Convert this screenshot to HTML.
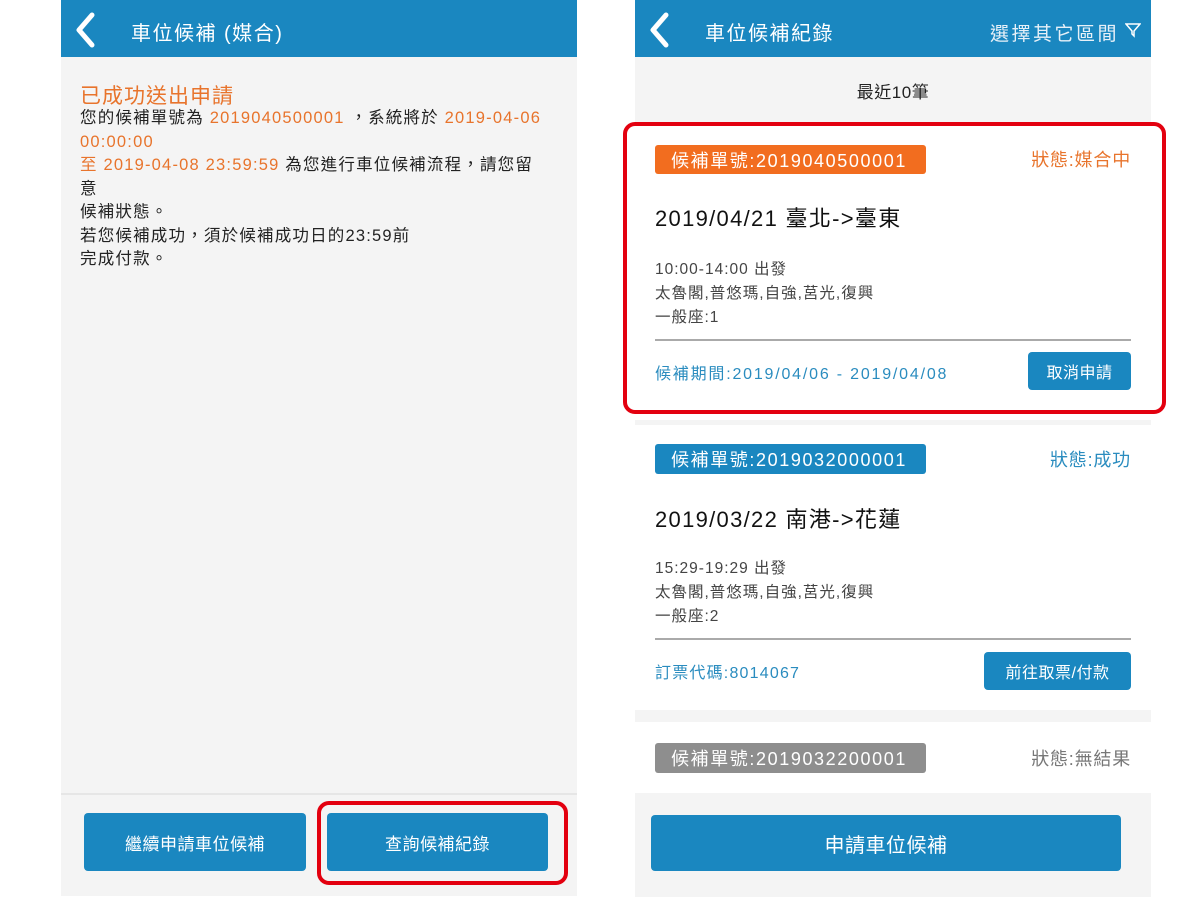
<!DOCTYPE html>
<html><head><meta charset="utf-8"><style>
*{margin:0;padding:0;box-sizing:border-box}
body{width:1200px;height:900px;background:#fff;position:relative;overflow:hidden;font-family:"Liberation Sans","Noto Sans CJK TC",sans-serif;color:#222}
.a{position:absolute;white-space:nowrap}
.hdr{background:#1a87c0;height:57px;top:0}
.ht{color:#fff;font-size:20px;letter-spacing:1.5px}
.or{color:#e8742c}
.bl{color:#2a8cbf}
.btn{position:absolute;background:#1a87c0;color:#fff;border-radius:4px;display:flex;align-items:center;justify-content:center;font-size:17px;letter-spacing:0.5px}
.badge{position:absolute;color:#fff;border-radius:3px;font-size:18px;display:flex;align-items:center;padding-left:16px;letter-spacing:1.6px}
.det{font-size:15.5px;color:#444;line-height:24px;letter-spacing:1px}
</style></head><body>
<!-- left panel -->
<div class="a" style="left:61px;top:0;width:516px;height:896px;background:#f4f4f4"></div>
<div class="a hdr" style="left:61px;width:516px"></div>
<svg class="a" style="left:72px;top:11px" width="28" height="38"><path d="M20 4 L7 19 L20 34" stroke="#fff" stroke-width="5" fill="none" stroke-linecap="round" stroke-linejoin="round"/></svg>
<div class="a ht" style="left:131px;top:17px">車位候補 (媒合)</div>
<div class="a or" style="left:80px;top:80px;font-size:21px;letter-spacing:1px">已成功送出申請</div>
<div class="a" style="left:80px;top:107px;font-size:16.5px;line-height:23.5px;color:#222;letter-spacing:1.2px">您的候補單號為 <span class="or">2019040500001</span> ，系統將於 <span class="or">2019-04-06</span><br><span class="or">00:00:00</span><br><span class="or">至 2019-04-08 23:59:59</span> 為您進行車位候補流程，請您留<br>意<br>候補狀態。<br>若您候補成功，須於候補成功日的23:59前<br>完成付款。</div>
<div class="a" style="left:61px;top:793px;width:516px;height:2px;background:#e6e6e6"></div>
<div class="btn" style="left:84px;top:813px;width:222px;height:58px">繼續申請車位候補</div>
<div class="btn" style="left:327px;top:813px;width:221px;height:58px">查詢候補紀錄</div>
<div class="a" style="left:317px;top:801px;width:251px;height:84px;border:4px solid #e3000f;border-radius:12px"></div>

<!-- right panel -->
<div class="a" style="left:635px;top:0;width:516px;height:897px;background:#f4f4f4"></div>
<div class="a hdr" style="left:635px;width:516px"></div>
<svg class="a" style="left:646px;top:11px" width="28" height="38"><path d="M20 4 L7 19 L20 34" stroke="#fff" stroke-width="5" fill="none" stroke-linecap="round" stroke-linejoin="round"/></svg>
<div class="a ht" style="left:705px;top:17px">車位候補紀錄</div>
<div class="a" style="left:990px;top:19px;color:#e6f0f8;font-size:19px;letter-spacing:2.5px">選擇其它區間</div>
<svg class="a" style="left:1125px;top:22px" width="16" height="16"><path d="M1 2 H15 L9 9 V14 L7 12 V9 Z" stroke="#fff" stroke-width="1.5" fill="none"/></svg>
<div class="a" style="left:635px;top:78px;width:516px;text-align:center;font-size:17px;color:#222;letter-spacing:0.5px">最近10筆</div>

<!-- card 1 -->
<div class="a" style="left:635px;top:122px;width:516px;height:298px;background:#fff"></div>
<div class="badge" style="left:655px;top:145px;width:271px;height:29px;background:#f26d1f">候補單號:2019040500001</div>
<div class="a or" style="right:69px;top:146px;font-size:18px;letter-spacing:0.8px">狀態:媒合中</div>
<div class="a" style="left:655px;top:201px;font-size:22px;color:#111;letter-spacing:1.3px">2019/04/21 臺北-&gt;臺東</div>
<div class="a det" style="left:655px;top:258px">10:00-14:00 出發<br>太魯閣,普悠瑪,自強,莒光,復興<br>一般座:1</div>
<div class="a" style="left:655px;top:339px;width:476px;height:2px;background:#aaa"></div>
<div class="a bl" style="left:655px;top:360px;font-size:16px;letter-spacing:1.8px">候補期間:2019/04/06 - 2019/04/08</div>
<div class="btn" style="left:1028px;top:352px;width:103px;height:38px;font-size:16px">取消申請</div>
<div class="a" style="left:623px;top:122px;width:543px;height:292px;border:4px solid #e3000f;border-radius:12px"></div>

<!-- card 2 -->
<div class="a" style="left:635px;top:425px;width:516px;height:285px;background:#fff"></div>
<div class="badge" style="left:655px;top:444px;width:271px;height:30px;background:#1a87c0">候補單號:2019032000001</div>
<div class="a bl" style="right:69px;top:446px;font-size:18px;letter-spacing:0.8px">狀態:成功</div>
<div class="a" style="left:655px;top:502px;font-size:22px;color:#111;letter-spacing:1.3px">2019/03/22 南港-&gt;花蓮</div>
<div class="a det" style="left:655px;top:557px">15:29-19:29 出發<br>太魯閣,普悠瑪,自強,莒光,復興<br>一般座:2</div>
<div class="a" style="left:655px;top:638px;width:476px;height:2px;background:#aaa"></div>
<div class="a bl" style="left:655px;top:659px;font-size:16px;letter-spacing:1.2px">訂票代碼:8014067</div>
<div class="btn" style="left:984px;top:652px;width:147px;height:38px;font-size:16px">前往取票/付款</div>

<!-- card 3 -->
<div class="a" style="left:635px;top:722px;width:516px;height:71px;background:#fff"></div>
<div class="badge" style="left:655px;top:743px;width:271px;height:30px;background:#8e8e8e">候補單號:2019032200001</div>
<div class="a" style="right:69px;top:745px;font-size:18px;color:#777;letter-spacing:0.8px">狀態:無結果</div>
<div class="btn" style="left:651px;top:815px;width:470px;height:56px;font-size:20px">申請車位候補</div>
</body></html>
